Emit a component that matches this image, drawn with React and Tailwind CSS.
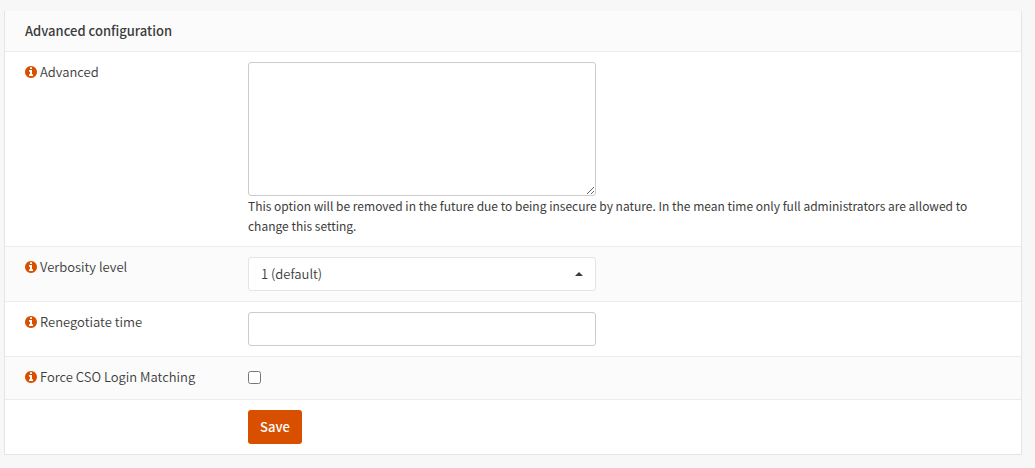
import React from "react";

function InfoIcon() {
  return (
    <svg viewBox="0 0 1536 1536" className="size-3 shrink-0 fill-[#d94f00]" aria-hidden="true">
      <path d="M1024 1248v-160q0-14-9-23t-23-9h-96v-512q0-14-9-23t-23-9h-320q-14 0-23 9t-9 23v160q0 14 9 23t23 9h96v320h-96q-14 0-23 9t-9 23v160q0 14 9 23t23 9h448q14 0 23-9t9-23zM896 352v-160q0-14-9-23t-23-9h-192q-14 0-23 9t-9 23v160q0 14 9 23t23 9h192q14 0 23-9t9-23zM1536 768q0 209-103 385.5t-279.5 279.5-385.5 103-385.5-103-279.5-279.5-103-385.5 103-385.5 279.5-279.5 385.5-103 385.5 103 279.5 279.5 103 385.5z" />
    </svg>
  );
}

function Row({ id, label, shaded, children }) {
  return (
    <div
      className={`grid grid-cols-[223px_minmax(0,1fr)] border-t border-[#ececec] ${shaded ? "bg-[#fbfbfb]" : "bg-white"}`}
    >
      <div className="px-5 py-2.5">
        {label && (
          <label htmlFor={id} className="flex items-center gap-[3px]">
            <InfoIcon />
            {label}
          </label>
        )}
      </div>
      <div className="px-5 py-2.5">{children}</div>
    </div>
  );
}

export default function App() {
  return (
    <main className="min-h-screen bg-[#f7f7f7] pt-[11px] pr-[13px] pb-3 pl-1 font-['Noto_Sans_CJK_SC',sans-serif] text-[13px] leading-5 font-[350] text-[#3c3c3b]">
      <form
        className="border-x border-b border-[#e5e5e5]"
        onSubmit={(event) => event.preventDefault()}
      >
        <h2 className="bg-[#fbfbfb] px-5 py-2.5 font-medium">Advanced configuration</h2>

        <Row id="advanced" label="Advanced">
          <textarea
            id="advanced"
            className="block h-[134px] w-full max-w-[348px] resize rounded-[3px] border border-[#cccccc] bg-white px-3 py-1.5"
          />
          <p className="text-[12px] leading-5 font-normal">
            This option will be removed in the future due to being insecure by nature. In the mean
            time only full administrators are allowed to change this setting.
          </p>
        </Row>

        <Row id="verbosity" label="Verbosity level" shaded>
          <div className="relative max-w-[348px]">
            <select
              id="verbosity"
              defaultValue="1"
              className="block h-[34px] w-full appearance-none rounded-[3px] border border-[#e5e5e5] bg-white px-3"
            >
              <option value="1">1 (default)</option>
            </select>
            <svg
              viewBox="0 0 8 4"
              className="pointer-events-none absolute top-[15px] right-[13px] h-1 w-2 fill-[#3c3c3b]"
              aria-hidden="true"
            >
              <path d="M0 4L4 0L8 4Z" />
            </svg>
          </div>
        </Row>

        <Row id="renegotiate" label="Renegotiate time">
          <input
            id="renegotiate"
            type="text"
            className="block h-[34px] w-full max-w-[348px] rounded-[3px] border border-[#cccccc] bg-white px-3"
          />
        </Row>

        <Row id="matching" label="Force CSO Login Matching" shaded>
          <div className="flex h-[22px] items-start pt-1">
            <input id="matching" type="checkbox" className="size-[13px]" />
          </div>
        </Row>

        <Row>
          <button
            type="submit"
            className="h-[34px] rounded-[3px] bg-[#d94f00] px-3 font-medium text-white"
          >
            Save
          </button>
        </Row>
      </form>
    </main>
  );
}
